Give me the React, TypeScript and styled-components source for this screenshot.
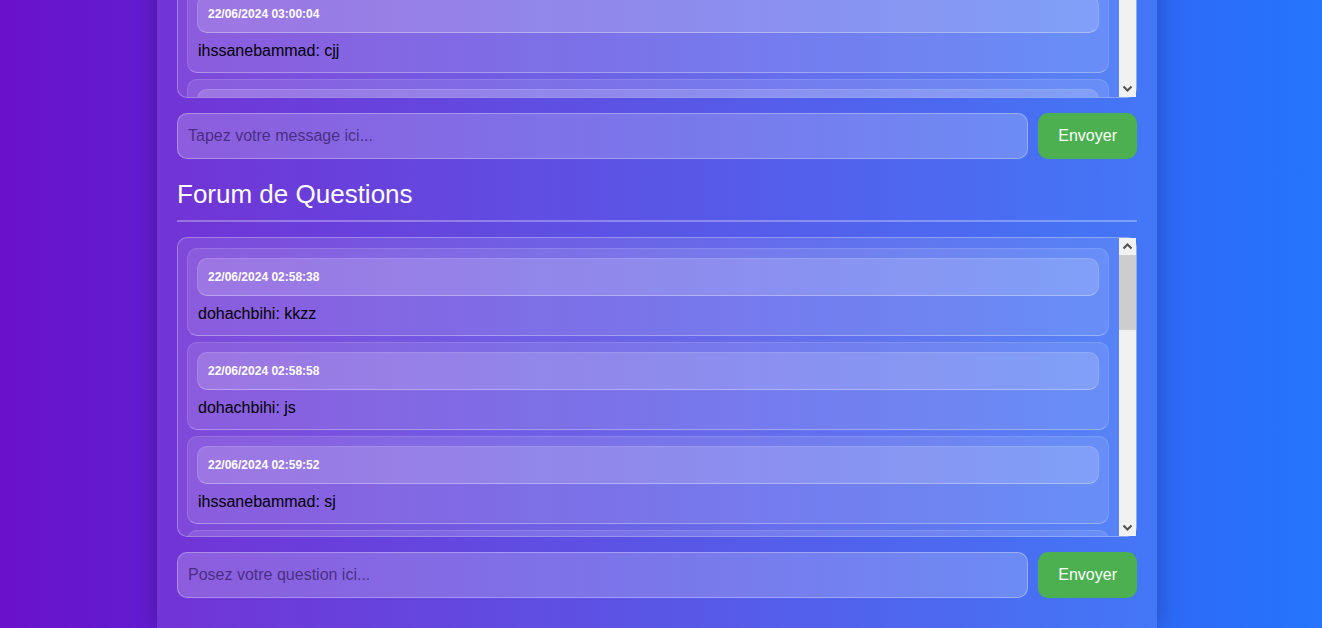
import React, { useLayoutEffect, useRef, useState } from 'react';
import styled, { createGlobalStyle } from 'styled-components';

const GlobalStyle = createGlobalStyle`
  html {
    scrollbar-width: none;
  }
  body {
    margin: 0;
    font-family: "Liberation Sans", Arial, sans-serif;
    background: linear-gradient(to right, #6a11cb, #2575fc);
    min-height: 100vh;
  }
`;

const Page = styled.div`
  display: flex;
  justify-content: center;
  padding-right: 8px;
`;

const Container = styled.main`
  width: 1000px;
  box-sizing: border-box;
  padding: 20px 20px 30px;
  background: rgba(255, 255, 255, 0.1);
  box-shadow: 0 0 20px rgba(0, 0, 0, 0.25);
`;

const PageTitle = styled.h1`
  margin: 0 0 20px;
  font-size: 32px;
  font-weight: bold;
  color: #fff;
  text-align: center;
`;

const SectionTitle = styled.h2<{ $first?: boolean }>`
  margin: ${(p) => (p.$first ? '0' : '20px')} 0 15px;
  padding-bottom: 11px;
  font-size: 26px;
  line-height: 30px;
  font-weight: normal;
  color: #fff;
  border-bottom: 2px solid rgba(255, 255, 255, 0.3);
`;

const MessageBox = styled.div`
  display: flex;
  height: 300px;
  box-sizing: border-box;
  border: 1px solid rgba(255, 255, 255, 0.3);
  border-radius: 10px;
  background: rgba(255, 255, 255, 0.1);
`;

const Scroller = styled.div`
  flex: 1;
  min-width: 0;
  overflow-y: auto;
  padding: 10px 10px 10px 9px;
  scrollbar-width: none;
`;

const Rail = styled.div`
  width: 17px;
  flex: none;
  display: flex;
  flex-direction: column;
  background: #f1f1f1;
`;

const RailButton = styled.div`
  height: 17px;
  flex: none;
  display: flex;
  align-items: center;
  justify-content: center;
  background: #f1f1f1;
`;

const RailTrack = styled.div`
  flex: 1;
  display: flex;
  flex-direction: column;
`;

const Thumb = styled.div`
  flex: none;
  background: #cdcdcd;
`;

const Card = styled.div`
  margin-bottom: 6px;
  padding: 9px;
  border: 1px solid rgba(255, 255, 255, 0.12);
  border-bottom-color: rgba(255, 255, 255, 0.32);
  border-radius: 10px;
  background: rgba(255, 255, 255, 0.1);
`;

const CardHeader = styled.div`
  height: 38px;
  box-sizing: border-box;
  display: flex;
  align-items: center;
  padding: 0 10px;
  border: 1px solid rgba(255, 255, 255, 0.12);
  border-bottom-color: rgba(255, 255, 255, 0.32);
  border-radius: 10px;
  background: rgba(255, 255, 255, 0.16);
  color: #fff;
  font-size: 12px;
  font-weight: bold;
`;

const MessageText = styled.p`
  margin: 6px 0 0;
  padding: 0 1px;
  font-size: 16px;
  line-height: 24px;
  color: #000;
`;

const InputRow = styled.form`
  display: flex;
  gap: 10px;
  margin-top: 15px;
`;

const TextInput = styled.input`
  flex: 1;
  height: 46px;
  box-sizing: border-box;
  padding: 0 10px;
  border: 1px solid rgba(255, 255, 255, 0.3);
  border-radius: 10px;
  background: rgba(255, 255, 255, 0.2);
  color: #fff;
  font-family: inherit;
  font-size: 16px;
  outline: none;

  &::placeholder {
    color: rgba(30, 10, 70, 0.62);
  }
`;

const SendButton = styled.button`
  padding: 0 20px;
  border: none;
  border-radius: 10px;
  background: #4caf50;
  color: #fff;
  font-family: inherit;
  font-size: 16px;
  cursor: pointer;
`;

const Chevron = ({ up }: { up?: boolean }) => (
  <svg width="17" height="17" viewBox="0 0 17 17">
    <path
      d={up ? 'M4.5 10.5 8.5 6.5 12.5 10.5' : 'M4.5 6.5 8.5 10.5 12.5 6.5'}
      fill="none"
      stroke="#505050"
      strokeWidth="2"
    />
  </svg>
);

type Msg = { date: string; text: string };

const chatMessages: Msg[] = [
  { date: '22/06/2024 02:59:21', text: 'dohachbihi: salut' },
  { date: '22/06/2024 02:59:40', text: 'ihssanebammad: hello' },
  { date: '22/06/2024 03:00:04', text: 'ihssanebammad: cjj' },
  { date: '22/06/2024 03:00:19', text: 'dohachbihi: ok' },
  { date: '22/06/2024 03:00:33', text: 'dohachbihi: test' },
];

const forumMessages: Msg[] = [
  { date: '22/06/2024 02:58:38', text: 'dohachbihi: kkzz' },
  { date: '22/06/2024 02:58:58', text: 'dohachbihi: js' },
  { date: '22/06/2024 02:59:52', text: 'ihssanebammad: sj' },
  { date: '22/06/2024 03:00:12', text: 'dohachbihi: question' },
  { date: '22/06/2024 03:01:05', text: 'ihssanebammad: ok' },
  { date: '22/06/2024 03:01:44', text: 'dohachbihi: merci' },
  { date: '22/06/2024 03:02:10', text: 'ihssanebammad: test' },
  { date: '22/06/2024 03:02:31', text: 'dohachbihi: aa' },
  { date: '22/06/2024 03:03:02', text: 'ihssanebammad: bb' },
  { date: '22/06/2024 03:03:40', text: 'dohachbihi: cc' },
  { date: '22/06/2024 03:04:15', text: 'ihssanebammad: dd' },
];

function MessageList({ items, initialScroll = 0 }: { items: Msg[]; initialScroll?: number }) {
  const ref = useRef<HTMLDivElement>(null);
  const [bar, setBar] = useState({ offset: 0, size: 60 });

  const measure = () => {
    const el = ref.current;
    if (!el) return;
    const track = el.clientHeight - 34;
    const size = Math.max(20, Math.round((track * el.clientHeight) / el.scrollHeight));
    const offset = Math.round((track * el.scrollTop) / el.scrollHeight);
    setBar({ offset, size });
  };

  useLayoutEffect(() => {
    if (ref.current) ref.current.scrollTop = initialScroll;
    measure();
  }, [initialScroll]);

  return (
    <MessageBox>
      <Scroller ref={ref} onScroll={measure}>
        {items.map((m, i) => (
          <Card key={i}>
            <CardHeader>{m.date}</CardHeader>
            <MessageText>{m.text}</MessageText>
          </Card>
        ))}
      </Scroller>
      <Rail>
        <RailButton>
          <Chevron up />
        </RailButton>
        <RailTrack>
          <div style={{ height: bar.offset, flex: 'none' }} />
          <Thumb style={{ height: bar.size }} />
        </RailTrack>
        <RailButton>
          <Chevron />
        </RailButton>
      </Rail>
    </MessageBox>
  );
}

export default function App() {
  useLayoutEffect(() => {
    window.scrollTo(0, document.documentElement.scrollHeight);
  }, []);

  return (
    <>
      <GlobalStyle />
      <Page>
        <Container>
          <PageTitle>Espace de Communication</PageTitle>
          <SectionTitle $first>Chat en Direct</SectionTitle>
          <MessageList items={chatMessages} initialScroll={12} />
          <InputRow onSubmit={(e) => e.preventDefault()}>
            <TextInput placeholder="Tapez votre message ici..." />
            <SendButton type="submit">Envoyer</SendButton>
          </InputRow>
          <SectionTitle>Forum de Questions</SectionTitle>
          <MessageList items={forumMessages} />
          <InputRow onSubmit={(e) => e.preventDefault()}>
            <TextInput placeholder="Posez votre question ici..." />
            <SendButton type="submit">Envoyer</SendButton>
          </InputRow>
        </Container>
      </Page>
    </>
  );
}
